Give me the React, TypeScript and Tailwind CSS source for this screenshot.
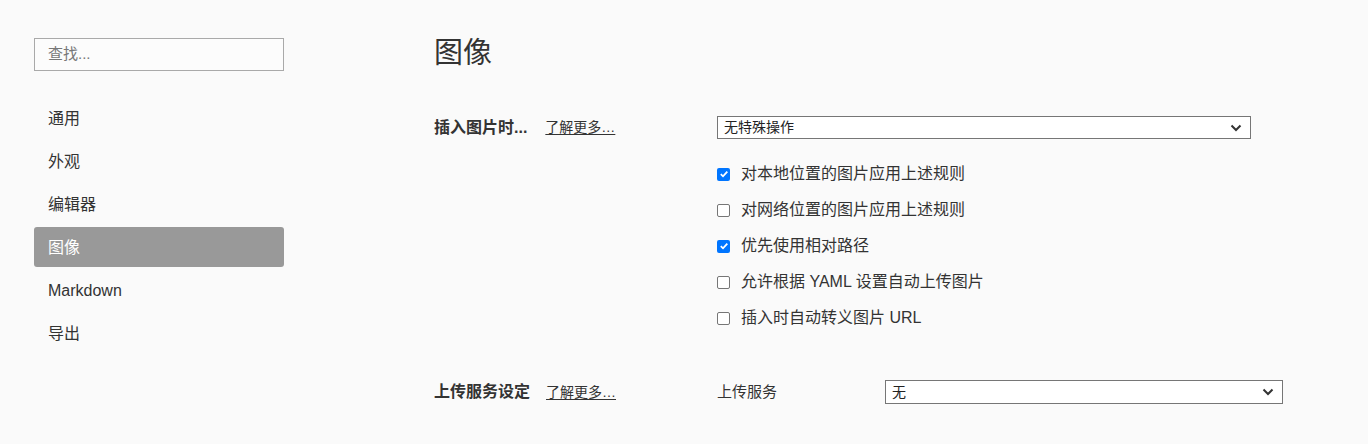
const font = { fontFamily: '"Liberation Sans", "Noto Sans CJK SC", sans-serif' };

const navItems = ["通用", "外观", "编辑器", "图像", "Markdown", "导出"];

const checks = [
  { label: "对本地位置的图片应用上述规则", checked: true },
  { label: "对网络位置的图片应用上述规则", checked: false },
  { label: "优先使用相对路径", checked: true },
  { label: "允许根据 YAML 设置自动上传图片", checked: false },
  { label: "插入时自动转义图片 URL", checked: false },
];

const Chevron = () => (
  <svg width="12" height="8" viewBox="0 0 12 8" className="shrink-0">
    <path d="M1.5 1.5 L6 6 L10.5 1.5" fill="none" stroke="#333" strokeWidth="2" />
  </svg>
);

const FakeSelect = ({ value, className }: { value: string; className: string }) => (
  <div
    className={`flex items-center justify-between border border-[#767676] bg-white pl-[6px] pr-[8px] text-[14px] text-[#222] ${className}`}
  >
    <span>{value}</span>
    <Chevron />
  </div>
);

const Checkbox = ({ checked }: { checked: boolean }) =>
  checked ? (
    <span className="flex h-[13px] w-[13px] items-center justify-center rounded-[2px] bg-[#0075ff]">
      <svg width="10" height="10" viewBox="0 0 10 10">
        <path d="M1.8 5.2 L4 7.3 L8.3 2.6" fill="none" stroke="white" strokeWidth="1.8" />
      </svg>
    </span>
  ) : (
    <span className="h-[13px] w-[13px] rounded-[2px] border border-[#767676] bg-white" />
  );

const App = () => {
  return (
    <div style={font} className="flex h-[444px] w-[1368px] overflow-hidden bg-[#fafafa] text-[#333]">
      <aside className="w-[434px] shrink-0 pl-[34px] pt-[38px]">
        <div className="flex h-[33px] w-[250px] items-center border border-[#a9a9a9] bg-[#fcfcfc] px-[13px] text-[15px] text-[#777]">
          查找...
        </div>
        <nav className="mt-[27px] flex w-[250px] flex-col gap-[3px]">
          {navItems.map((item) => (
            <div
              key={item}
              className={`flex h-10 items-center rounded-[3px] px-[14px] pt-[2px] text-[16px] ${
                item === "图像" ? "bg-[#999999] text-white" : "text-[#333]"
              }`}
            >
              {item}
            </div>
          ))}
        </nav>
      </aside>

      <main className="flex-1 pt-[33px]">
        <h1 className="h-[40px] text-[29px] leading-[40px] text-[#333]">图像</h1>

        <section className="mt-[43px] flex">
          <div className="flex h-[23px] w-[283px] shrink-0 items-center gap-[18px]">
            <span className="text-[16px] font-bold">插入图片时...</span>
            <span className="text-[14px] underline underline-offset-2">了解更多…</span>
          </div>
          <div className="flex flex-col">
            <FakeSelect value="无特殊操作" className="h-[23px] w-[534px]" />
            <div className="mt-[17px] flex flex-col">
              {checks.map((c) => (
                <label key={c.label} className="flex h-9 items-center gap-[11px] text-[16px]">
                  <Checkbox checked={c.checked} />
                  <span>{c.label}</span>
                </label>
              ))}
            </div>
          </div>
        </section>

        <section className="mt-[44px] flex items-center">
          <div className="flex w-[283px] shrink-0 items-center gap-[16px]">
            <span className="text-[16px] font-bold">上传服务设定</span>
            <span className="text-[14px] underline underline-offset-2">了解更多…</span>
          </div>
          <span className="w-[168px] shrink-0 text-[15px]">上传服务</span>
          <FakeSelect value="无" className="h-[24px] w-[398px]" />
        </section>
      </main>
    </div>
  );
};

export default App;
